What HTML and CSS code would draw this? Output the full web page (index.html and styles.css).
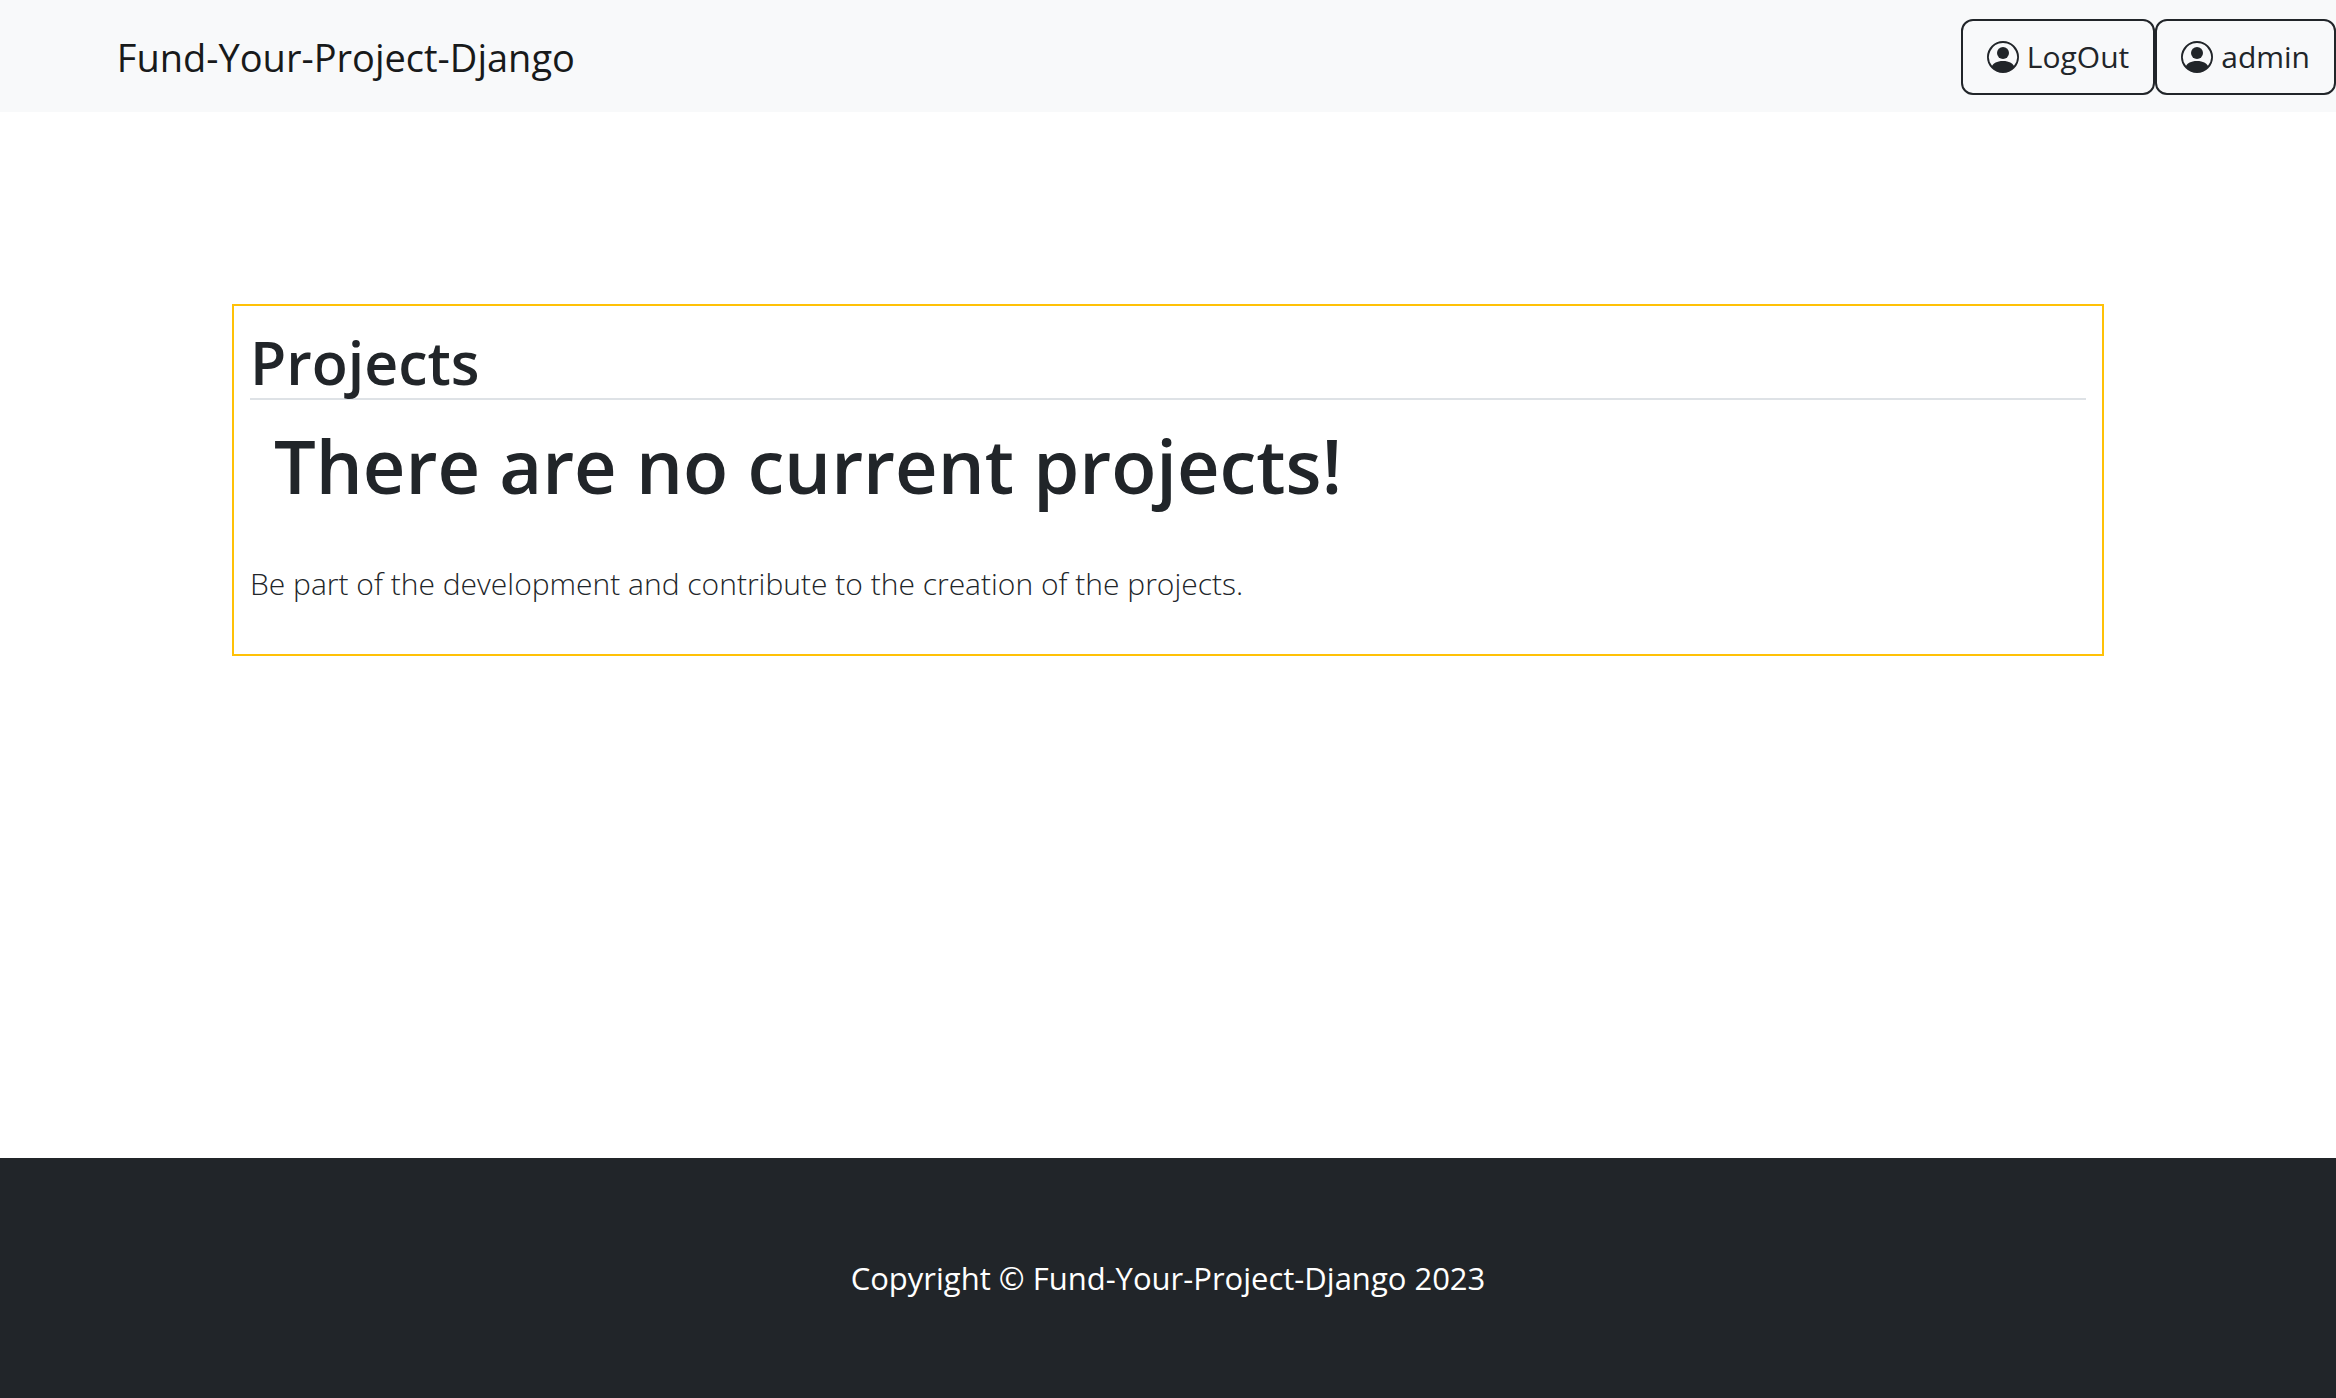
FILE: index.html
```html
<!DOCTYPE html>
<html lang="en">
<head>
<meta charset="utf-8">
<title>Fund-Your-Project-Django</title>
<link rel="stylesheet" href="styles.css">
</head>
<body>
<nav class="navbar">
  <a class="brand" href="#">Fund-Your-Project-Django</a>
  <div class="actions">
    <button class="btn" type="button"><svg class="icon" viewBox="0 0 16 16" fill="currentColor" aria-hidden="true"><path d="M11 6a3 3 0 1 1-6 0 3 3 0 0 1 6 0z"/><path fill-rule="evenodd" d="M0 8a8 8 0 1 1 16 0A8 8 0 0 1 0 8zm8-7a7 7 0 0 0-5.468 11.37C3.242 11.226 4.805 10 8 10s4.757 1.225 5.468 2.37A7 7 0 0 0 8 1z"/></svg>LogOut</button>
    <button class="btn" type="button"><svg class="icon" viewBox="0 0 16 16" fill="currentColor" aria-hidden="true"><path d="M11 6a3 3 0 1 1-6 0 3 3 0 0 1 6 0z"/><path fill-rule="evenodd" d="M0 8a8 8 0 1 1 16 0A8 8 0 0 1 0 8zm8-7a7 7 0 0 0-5.468 11.37C3.242 11.226 4.805 10 8 10s4.757 1.225 5.468 2.37A7 7 0 0 0 8 1z"/></svg>admin</button>
  </div>
</nav>
<main class="content">
  <section class="panel">
    <h2 class="panel-title">Projects</h2>
    <h1 class="empty">There are no current projects!</h1>
    <p class="lead">Be part of the development and contribute to the creation of the projects.</p>
  </section>
</main>
<footer class="footer">
  <p class="copyright">Copyright © Fund-Your-Project-Django 2023</p>
</footer>
</body>
</html>
```

FILE: styles.css
```css
* { box-sizing: border-box; }
body {
  margin: 0;
  min-height: 100vh;
  display: flex;
  flex-direction: column;
  background: #fff;
  color: #212529;
  font-family: "Open Sans", "Noto Sans", sans-serif;
  font-size: 30px;
  line-height: 48px;
}
h1, h2, p { margin: 0; }
.navbar {
  display: flex;
  align-items: center;
  justify-content: space-between;
  padding: 19px 0 17px 5%;
  background: #f8f9fa;
}
.brand {
  color: #181a1b;
  font-size: 38px;
  text-decoration: none;
}
.actions { display: flex; }
.btn {
  display: flex;
  align-items: center;
  gap: 8px;
  padding: 12px 24px;
  border: 2px solid #212529;
  border-radius: 12px;
  background: transparent;
  color: #212529;
  font: inherit;
}
.icon { width: 32px; height: 32px; }
.content {
  flex: 1;
  padding: 192px 232px;
}
.panel {
  padding: 16px;
  border: 2px solid #ffc107;
}
.panel-title {
  padding-top: 4px;
  border-bottom: 2px solid #dee2e6;
  font-size: 59px;
  font-weight: 600;
  line-height: 72px;
}
.empty {
  padding: 20px 24px 28px;
  font-size: 74px;
  font-weight: 600;
  line-height: 92px;
}
.lead {
  font-weight: 300;
  padding: 20px 0 30px;
}
.footer {
  padding: 96px 24px;
  background: #212529;
  color: #fff;
  font-size: 31px;
  text-align: center;
}
```
